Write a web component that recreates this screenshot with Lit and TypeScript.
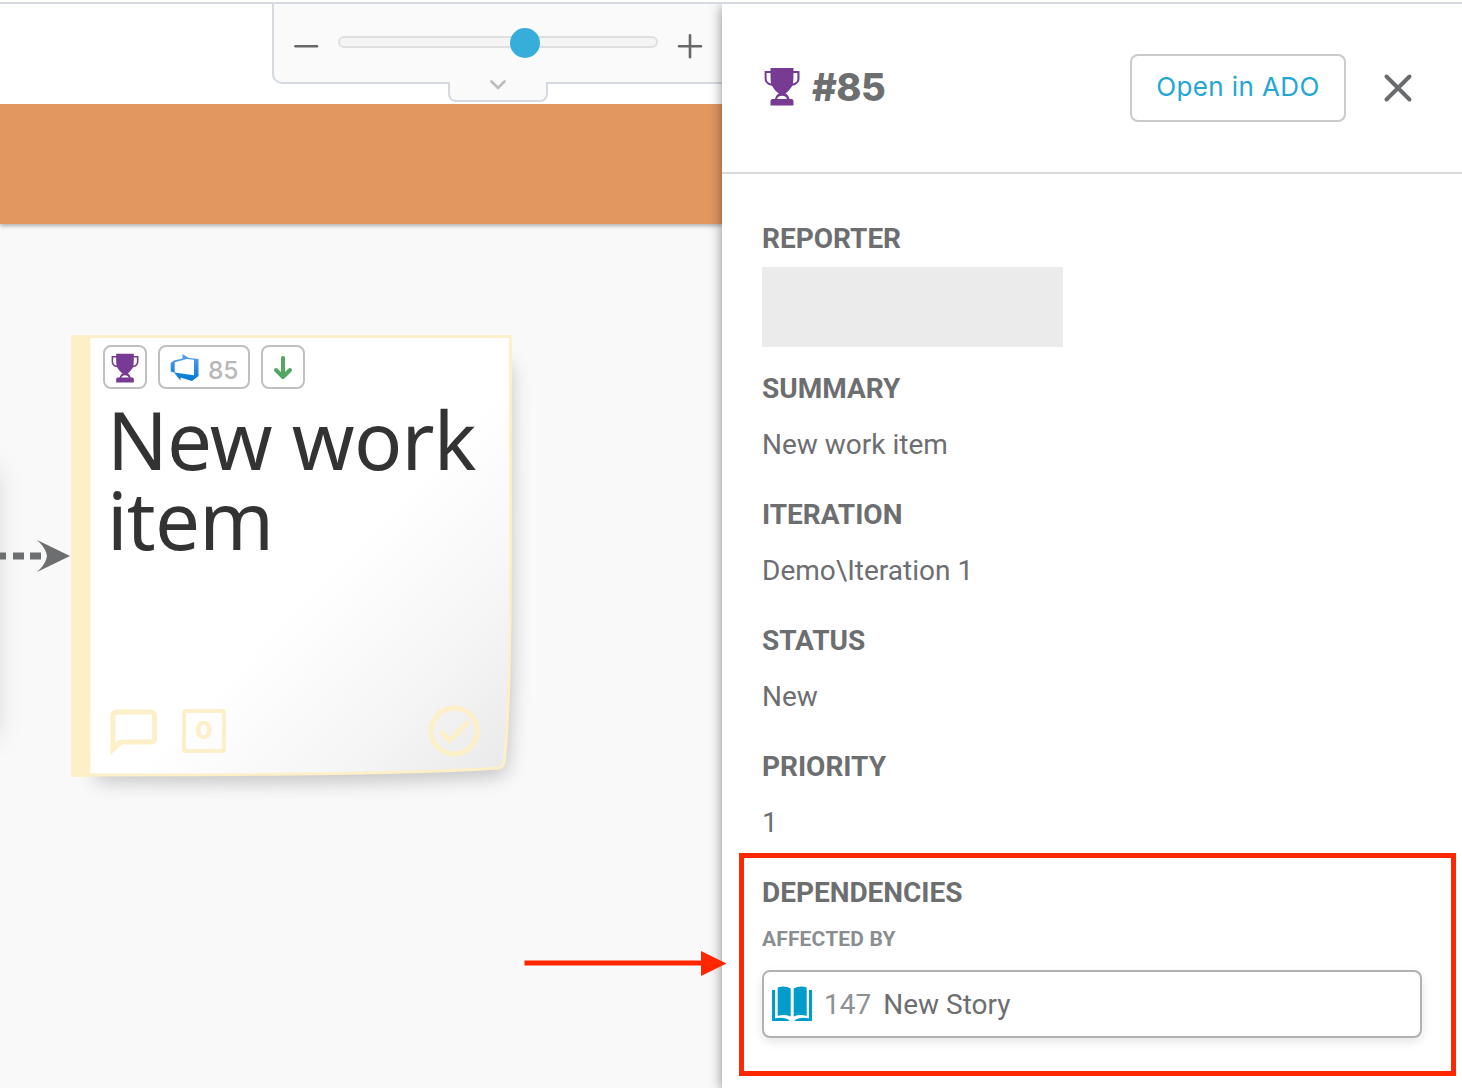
import { LitElement, html, css } from "lit";
import { customElement, property } from "lit/decorators.js";

const trophy = (cls: string) => html`
  <svg class=${cls} viewBox="0 0 36 39">
    <path fill="#773b93" fill-rule="evenodd"
      d="M6.5 1h23v3h6v7.5c0 4-3 6.5-7.2 7.3C26 22.500 23.500 25 21.500 26.500c2 .8 3.300 2.500 4 5.500h2.500q1.500.5 1.500 2.500v4h-23v-4q0-2 1.500-2.500H11c.7-3 2-4.700 4-5.500C12.500 25 10 22.500 8 18.800 3.600 18 .6 15.500.6 11.500V4h5.900zM2.600 6v5.500c0 2.600 1.400 4.200 4.400 5C6.600 14 6.500 9 6.500 6zM33.400 6h-3.900c0 3-.1 8-.5 10.500 3-.8 4.400-2.400 4.400-5zM13 32h10c-.8-2-2.500-3.200-5-3.200s-4.200 1.200-5 3.200z"/>
  </svg>`;

@customElement("zoom-control")
class ZoomControl extends LitElement {
  static styles = css`
    :host { display: block; position: relative; }
    .bar {
      box-sizing: border-box; height: 80px; display: flex; align-items: center;
      padding-left: 18px; background: #fafafa; border: 2px solid #d5dae0;
      border-top: 0; border-right: 0; border-bottom-left-radius: 10px;
    }
    .glyph { width: 28px; height: 28px; margin-top: 6px; flex: none; stroke: #666768; stroke-width: 2.6; stroke-linecap: round; }
    .track {
      box-sizing: border-box; width: 320px; height: 12px; margin: 0 18px; margin-bottom: 2px;
      display: flex; align-items: center; padding-left: 170px; flex: none;
      border: 2px solid #dfdfdf; border-radius: 6px; background: #f4f4f4;
    }
    .thumb { width: 30px; height: 30px; flex: none; border-radius: 50%; background: #37aeda; margin-top: 2px; }
    .tab {
      position: absolute; left: 176px; top: 78px; box-sizing: border-box; width: 100px; height: 20px;
      background: #fafafa; border: 2px solid #d5dae0; border-top: 0; border-radius: 0 0 8px 8px;
    }
    .chev { display: block; margin: -3px auto 0; width: 18px; height: 12px; fill: none; stroke: #bcbcbc; stroke-width: 2.6; stroke-linecap: round; }
  `;
  render() {
    return html`
      <div class="bar">
        <svg class="glyph" viewBox="0 0 28 28"><path d="M3.500 14.200H25"/></svg>
        <div class="track"><div class="thumb"></div></div>
        <svg class="glyph" viewBox="0 0 28 28"><path d="M3 14.200H25M14 3.200V25.200"/></svg>
      </div>
      <div class="tab"><svg class="chev" viewBox="0 0 18 12"><path d="M2.500 2.500L9 9L15.500 2.500"/></svg></div>`;
  }
}

@customElement("sticky-note")
class StickyNote extends LitElement {
  static styles = css`
    :host { display: block; position: relative; width: 442px; height: 442px; }
    .paper { position: absolute; left: -40px; top: -40px; width: 540px; height: 540px; }
    .body { position: relative; box-sizing: border-box; height: 100%; padding: 10px 33px 20px 32px; display: flex; flex-direction: column; }
    .chips { display: flex; gap: 11px; }
    .chip {
      box-sizing: border-box; height: 44px; width: 44px; display: flex; align-items: center; justify-content: center;
      border: 2px solid #c0c0c0; border-radius: 8px; background: #fff; color: #b8b8b8;
    }
    .wide { width: 92px; gap: 8px; }
    .cup { width: 28px; height: 30px; margin-top: 2px; }
    .azure { width: 30px; height: 30px; }
    .num { font: 500 24.500px/40px Inter, sans-serif; letter-spacing: -0.2px; margin-top: 5px; }
    .down { width: 24px; height: 28px; fill: none; stroke: #55a662; stroke-width: 4; stroke-linecap: round; stroke-linejoin: round; }
    .title { margin-top: 10px; margin-left: 4px; font: 400 80px/80px "Noto Sans", sans-serif; color: #333; letter-spacing: -0.8px; white-space: pre-line; }
    .foot { margin-top: auto; display: flex; align-items: center; margin-left: 7px; }
    .foot svg { display: block; fill: none; stroke: #fdf0c8; }
    .comment { width: 48px; height: 48px; stroke-width: 5; }
    .comment .tail { stroke: none; fill: #fdf0c8; }
    .count {
      box-sizing: border-box; width: 44px; height: 44px; margin-left: 24px; border: 4px solid #fdf0c8; border-radius: 4px;
      text-align: center; font: 800 25px/35px Inter, sans-serif; color: #fdf0c8;
    }
    .check { width: 52px; height: 52px; margin-left: auto; stroke-width: 5; stroke-linecap: round; }
  `;
  render() {
    return html`
      <svg class="paper" viewBox="-40 -40 540 540">
        <defs>
          <linearGradient id="pg" x1="0" y1="0" x2="1" y2="1">
            <stop offset="0.55" stop-color="#fff"/><stop offset="0.8" stop-color="#f5f5f5"/><stop offset="1" stop-color="#e9e9e9"/>
          </linearGradient>
          <filter id="blur" x="-20%" y="-20%" width="140%" height="140%"><feGaussianBlur stdDeviation="10"/></filter>
        </defs>
        <path d="M24 30H440L441 300Q441 400 434 440Q300 450 24 446Z" fill="#000" opacity="0.22" filter="url(#blur)"/>
        <path d="M18 1.500H439.500V200Q439.500 380 433 428Q432 432.500 427.500 433Q330 440 18 440Z" fill="url(#pg)" stroke="#fdf0c8" stroke-width="2.800"/>
        <path d="M0 0H18.700V442H0Z" fill="#fdf0c8"/>
      </svg>
      <div class="body">
        <div class="chips">
          <div class="chip">${trophy("cup")}</div>
          <div class="chip wide">
            <svg class="azure" viewBox="0 0 30 30">
              <defs><linearGradient id="az" x1="0" y1="0" x2="0" y2="1"><stop offset="0" stop-color="#5ea0ef"/><stop offset="1" stop-color="#0078d4"/></linearGradient></defs>
              <path fill="url(#az)" fill-rule="evenodd" d="M0.700 11L4 8.500L12.500 6.500V2L19 6L28.500 7V24L22 29L10.500 25.500V28.500L6 23L4 20.500L0.700 19.500ZM4.700 10.300V20.500L24 23.300V7.800L16.500 7Z"/>
            </svg>
            <span class="num">85</span>
          </div>
          <div class="chip"><svg class="down" viewBox="0 0 24 28"><path d="M12 5V23M5 17L12 24L19 17"/></svg></div>
        </div>
        <div class="title">New work
item</div>
        <div class="foot">
          <svg class="comment" viewBox="0 0 48 48"><path d="M3 39V9Q3 5 7 5H40.500Q44.500 5 44.500 9V31Q44.500 35 40.500 35H12.500Q9.500 35 7.500 37Z"/><path class="tail" d="M0.500 34V48L13.500 36Z"/></svg>
          <div class="count">0</div>
          <svg class="check" viewBox="0 0 52 52"><circle cx="26" cy="26" r="23"/><path d="M14 28L21.500 35.500L38.500 18.500"/></svg>
        </div>
      </div>`;
  }
}

@customElement("detail-field")
class DetailField extends LitElement {
  @property() label = "";
  @property() value = "";
  static styles = css`
    :host { display: flex; flex-direction: column; gap: 24px; color: #6d6e70; font: 400 28px/32px Roboto, sans-serif; }
    .label { font-weight: 700; letter-spacing: -0.02px; }
  `;
  render() {
    return html`<div class="label">${this.label}</div><div class="value">${this.value}</div>`;
  }
}

@customElement("app-root")
class AppRoot extends LitElement {
  static styles = css`
    :host { display: block; }
    .page { position: relative; box-sizing: border-box; width: 1462px; height: 1088px; display: flex; flex-direction: column; padding-top: 2px; background: #fff; overflow: hidden; }
    .main { flex: 1; display: flex; border-top: 2px solid #d5dae0; overflow: hidden; }
    .board { width: 722px; display: flex; flex-direction: column; background: #f9f9f9; }
    .top { height: 100px; box-sizing: border-box; padding-left: 272px; background: #fff; }
    .lane { position: relative; height: 120px; flex: none; background: #e29760; box-shadow: 0 2px 4px rgba(0,0,0,.3); clip-path: inset(0 0 -10px 0); }
    .canvas { position: relative; flex: 1; overflow: hidden; }
    .note { position: absolute; left: 71px; top: 111px; }
    .edge { position: absolute; left: -60px; top: 246px; width: 52px; height: 264px; box-shadow: 0 0 30px rgba(0,0,0,.22); }
    .link { position: absolute; left: 0; top: 312px; width: 72px; height: 40px; }
    .panel { position: relative; width: 740px; box-sizing: border-box; background: #fff; box-shadow: 0 2px 12px rgba(0,0,0,.45); display: flex; flex-direction: column; color: #6d6e70; }
    .head { box-sizing: border-box; height: 170px; border-bottom: 2px solid #d8dbde; display: flex; align-items: flex-start; padding: 50px 44px 0 42px; }
    .cup { width: 36px; height: 39px; margin-top: 13px; }
    .id { margin: 9px 0 0 12px; font: 800 38px/48px Inter, sans-serif; letter-spacing: -0.6px; }
    .open { box-sizing: border-box; width: 216px; height: 68px; margin-left: auto; border: 2px solid #cbcbcb; border-radius: 8px; background: #fff; color: #24a6d5; font: 400 26px/62px Inter, sans-serif; letter-spacing: 0.4px; text-align: center; padding: 0 0 2px; white-space: nowrap; }
    .close { width: 40px; height: 40px; margin: 14px 0 0 32px; stroke: #6a6b6d; stroke-width: 4; stroke-linecap: round; }
    .content { padding: 49px 40px 0; display: flex; flex-direction: column; font: 400 28px/32px Roboto, sans-serif; }
    .h { font-weight: 700; letter-spacing: -0.02px; }
    .redacted { width: 301px; height: 80px; margin: 12px 0 26px; background: #ebebeb; }
    .fields { display: flex; flex-direction: column; gap: 38px; margin-bottom: 38px; }
    .sub { margin-top: 18px; font: 700 21px/24px Roboto, sans-serif; letter-spacing: 0.15px; color: #8b8e91; }
    .dep { box-sizing: border-box; height: 68px; margin-top: 19px; display: flex; align-items: center; padding-left: 8px; border: 2px solid #b1b1b1; border-radius: 8px; box-shadow: 0 4px 10px rgba(0,0,0,.1); }
    .book { width: 40px; height: 36px; }
    .key { margin: 2px 0 0 12px; color: #8e9194; }
    .name { margin: 2px 0 0 12px; }
    .frame { position: absolute; left: 738.500px; top: 852.500px; width: 707.500px; height: 213px; border: 5px solid #ff2600; }
    .pointer { position: absolute; left: 524px; top: 948px; width: 204px; height: 32px; }
  `;
  render() {
    const fields = [
      ["SUMMARY", "New work item"],
      ["ITERATION", "Demo\\Iteration 1"],
      ["STATUS", "New"],
      ["PRIORITY", "1"],
    ];
    return html`
      <div class="page">
        <div class="main">
          <div class="board">
            <div class="top"><zoom-control></zoom-control></div>
            <div class="lane"></div>
            <div class="canvas">
              <div class="edge"></div>
              <svg class="link" viewBox="0 0 72 40">
                <path d="M0 16.500H6V23.500H0ZM13 16.500H24V23.500H13ZM30 16.500H41V23.500H30Z" fill="#6d6e70"/>
                <path d="M37 4L70 20L37 36Q46 28 47 20Q46 12 37 4Z" fill="#6d6e70"/>
              </svg>
              <sticky-note class="note"></sticky-note>
            </div>
          </div>
          <div class="panel">
            <div class="head">
              ${trophy("cup")}
              <div class="id">#85</div>
              <button class="open">Open in ADO</button>
              <svg class="close" viewBox="0 0 40 40"><path d="M8.500 8.500L31.500 31.500M31.500 8.500L8.500 31.500"/></svg>
            </div>
            <div class="content">
              <div class="h">REPORTER</div>
              <div class="redacted"></div>
              <div class="fields">
                ${fields.map(([l, v]) => html`<detail-field .label=${l} .value=${v}></detail-field>`)}
              </div>
              <div class="h">DEPENDENCIES</div>
              <div class="sub">AFFECTED BY</div>
              <div class="dep">
                <svg class="book" viewBox="0 0 40 36">
                  <path fill="#009ccc" d="M5.700 1.500Q13-.8 18.700 2.500V30.500Q12 28 5.700 30ZM21.700 2.500Q28-.8 34.700 1.500V30Q28 28 21.700 30.500ZM0 4H3V32.300Q13 30.500 18 35H0ZM40 4H37V32.300Q27 30.500 22 35H40Z"/>
                </svg>
                <span class="key">147</span><span class="name">New Story</span>
              </div>
            </div>
          </div>
        </div>
        <div class="frame"></div>
        <svg class="pointer" viewBox="0 0 204 32">
          <path d="M0.500 12.500H177V3L202.500 15.500L177 28V17.500H0.500Z" fill="#ff2600"/>
        </svg>
      </div>`;
  }
}
